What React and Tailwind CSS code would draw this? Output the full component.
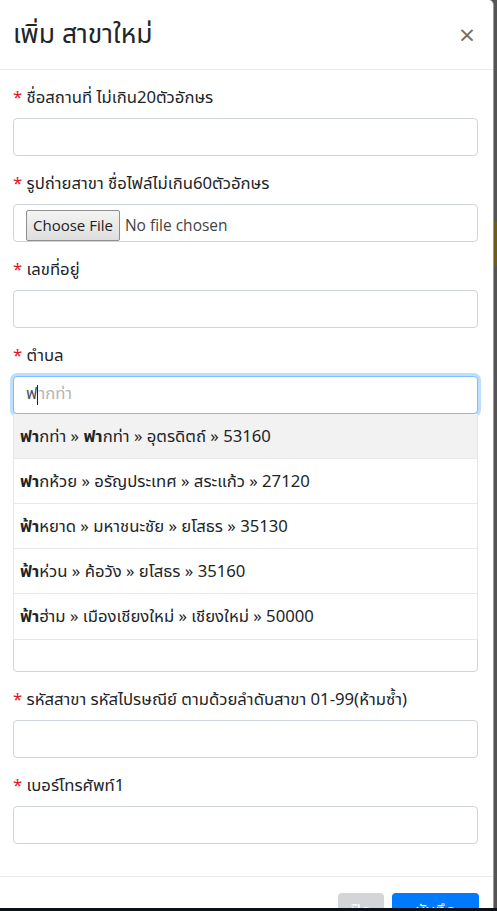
import React from "react";

const font = { fontFamily: '"Noto Sans Thai", Tahoma, "Noto Sans", "DejaVu Sans", sans-serif' };
const uiFont = { fontFamily: '"Open Sans", "DejaVu Sans", sans-serif' };

function Label({ children }) {
  return (
    <label className="block h-6 mb-2 text-[16.7px] leading-[25px] text-[#212529] whitespace-nowrap">
      <span className="text-[#e3121b]">*</span>{" "}{children}
    </label>
  );
}

function Input() {
  return <div className="h-[38px] rounded border border-[#ced4da] bg-white" />;
}

function Group({ label, children }) {
  return (
    <div className="mb-4">
      <Label>{label}</Label>
      {children || <Input />}
    </div>
  );
}

const items = [
  ["ฟา", "กท่า » ", "ฟา", "กท่า » อุตรดิตถ์ » 53160"],
  ["ฟา", "กห้วย » อรัญประเทศ » สระแก้ว » 27120"],
  ["ฟ้า", "หยาด » มหาชนะชัย » ยโสธร » 35130"],
  ["ฟ้า", "ห่วน » ค้อวัง » ยโสธร » 35160"],
  ["ฟ้า", "ฮ่าม » เมืองเชียงใหม่ » เชียงใหม่ » 50000"],
];

export default function App() {
  return (
    <div className="w-[497px] h-[911px] overflow-hidden bg-[#4f4f4f] flex flex-col" style={font}>
      <div className="flex flex-1 min-h-0">
        <div className="w-[494px] h-full bg-white border-r border-[#9a9a9a] rounded-tr-[5px] overflow-hidden flex flex-col shrink-0">
          {/* header */}
          <div className="flex items-start justify-between pl-[13px] pr-[15px] pt-[17px] border-b border-[#e9ecef] h-[70px] shrink-0">
            <h4 className="text-[26.5px] leading-9 text-[#212529] font-normal">เพิ่ม สาขาใหม่</h4>
            <span className="text-[28px] leading-none font-normal text-[#6f6f6f] mt-[3px] mr-[3px]" style={uiFont}>×</span>
          </div>
          {/* body */}
          <div className="relative pl-[13px] pr-[15px] pt-4 pb-4 shrink-0">
            <Group label="ชื่อสถานที่ ไม่เกิน20ตัวอักษร" />
            <Group label="รูปถ่ายสาขา ชื่อไฟล์ไม่เกิน60ตัวอักษร">
              <div className="h-[38px] rounded border border-[#ced4da] bg-white flex items-end pl-3 gap-[5px]">
                <span className="h-[31px] px-[6px] flex items-center text-[15px] text-[#222] border border-[#8f8f8f] rounded-[2px] bg-gradient-to-b from-[#f4f4f4] to-[#dedede]" style={uiFont}>
                  Choose File
                </span>
                <span className="h-[31px] flex items-center text-[15.5px] text-[#444]" style={uiFont}>No file chosen</span>
              </div>
            </Group>
            <Group label="เลขที่อยู่" />
            <Group label="ตำบล">
              <div className="h-[38px] rounded border border-[#80bdff] shadow-[0_0_0_3px_rgba(0,123,255,0.25)] bg-white flex items-center pl-3 text-[16.7px]">
                <span className="text-[#495057]">ฟ</span>
                <span className="w-px h-[20px] bg-[#222]" />
                <span className="text-[#b5b5b5]">ากท่า</span>
              </div>
            </Group>
            <Group label="อำเภอ" />
            <Group label="จังหวัด" />
            <Group label="รหัสไปรษณีย์" />
            <Group label="รหัสสาขา รหัสไปรษณีย์ ตามด้วยลำดับสาขา 01-99(ห้ามซ้ำ)" />
            <Group label="เบอร์โทรศัพท์1" />

            {/* autocomplete dropdown */}
            <div className="absolute left-[13px] right-[15px] top-[344px] bg-white border border-[#e6e6e6] border-t-0">
              {items.map((it, i) => (
                <div
                  key={i}
                  className={`h-[45px] flex items-center pt-[3px] pl-[6px] text-[16.7px] text-[#212529] whitespace-pre ${i < items.length - 1 ? "border-b border-[#e9e9e9]" : ""} ${i === 0 ? "bg-[#f2f2f2]" : "bg-white"}`}
                >
                  {it.map((part, j) => (
                    <span key={j} className={j % 2 === 0 ? "font-bold" : ""}>{part}</span>
                  ))}
                </div>
              ))}
            </div>
          </div>
          {/* footer */}
          <div className="flex justify-end gap-2 pl-[13px] pr-[14px] pt-4 border-t border-[#e9ecef] shrink-0">
            <button className="h-[38px] w-[46px] rounded bg-[#d3d5d8] text-[#fff] text-[16.7px]">ปิด</button>
            <button className="h-[38px] w-[87px] rounded bg-[#007bff] text-white text-[16.7px]">บันทึก</button>
          </div>
        </div>
        <div className="flex-1 flex flex-col">
          <div className="h-[222px] bg-[#555]" />
          <div className="h-[44px] bg-[#6e5d1a]" />
          <div className="flex-1 bg-[#555]" />
        </div>
      </div>
      <div className="h-[3px] bg-[#0c1117]" />
    </div>
  );
}
